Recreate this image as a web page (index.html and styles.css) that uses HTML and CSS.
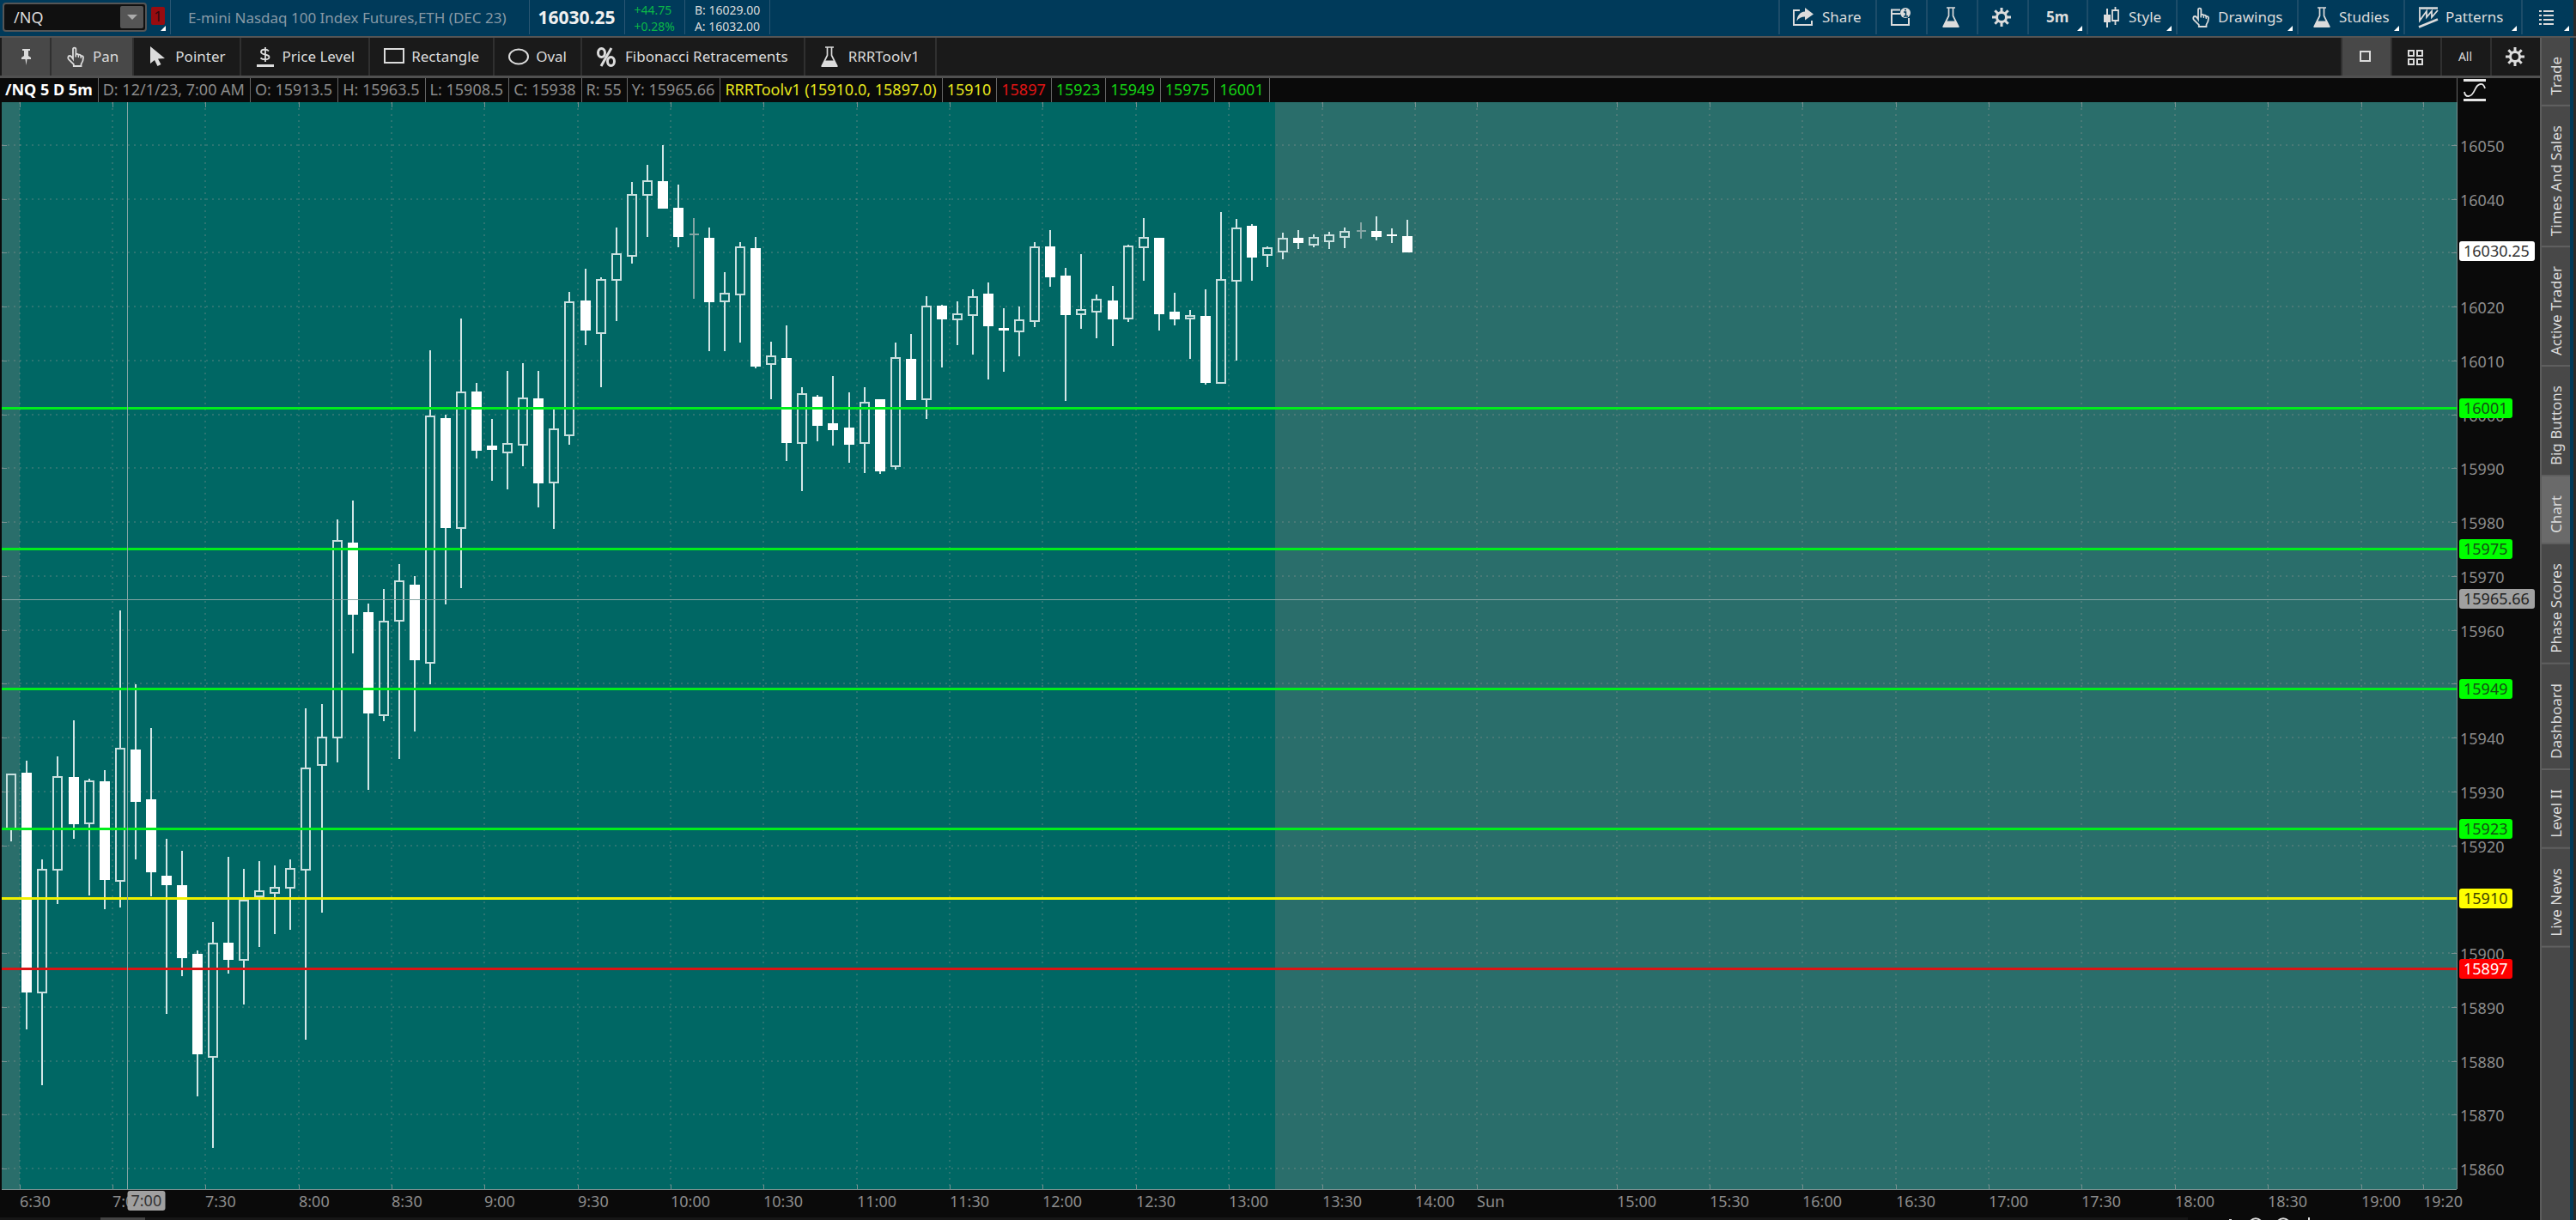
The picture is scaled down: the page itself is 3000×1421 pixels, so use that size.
FILE: index.html
```html
<!DOCTYPE html>
<html lang="en">
<head>
    <meta charset="UTF-8">
    <meta name="viewport" content="width=device-width, initial-scale=1.0">
    <title>/NQ Chart</title>
    <link rel="stylesheet" href="styles.css">
</head>
<body>
    <svg class="defs" width="0" height="0" aria-hidden="true">
        <symbol id="hand" viewBox="0 0 24 24">
            <path d="M9 14.500V3.500c0-2.600 3.400-2.600 3.400 0V9.500c.6-1 2.700-1 3 .6 1-.8 2.700-.3 2.900 1.200 1.300-.6 2.700.2 2.700 1.800 0 3.400-.8 5.500-2.500 7.700V23H9.800v-2.200L4.200 15.300c-1.700-1.800-1-4.300 1-4.300 1.400 0 2.600 1.500 3.800 3.500z" fill="none" stroke="currentColor" stroke-width="1.800"/>
            <path d="M12.400 9.500v3M15.400 10.500v2.500M18.300 11.500v2.500" stroke="currentColor" stroke-width="1.300"/>
        </symbol>
        <symbol id="flask" viewBox="0 0 24 24">
            <path d="M7 1h10M9.500 1v9.500L3.500 22.500h17L14.500 10.500V1" fill="none" stroke="currentColor" stroke-width="1.700"/>
            <path d="M6.500 16.500h11l4.200 7.500H2.300z" fill="currentColor"/>
        </symbol>
        <symbol id="gear" viewBox="0 0 24 24">
            <g stroke="currentColor" stroke-width="3">
                <path d="M12 1v5M12 18v5M1 12h5M18 12h5M4.300 4.300l3.500 3.500M16.200 16.200l3.500 3.500M4.300 19.700l3.500-3.500M16.200 7.800l3.500-3.500"/>
                <circle cx="12" cy="12" r="5.500" fill="none"/>
            </g>
        </symbol>
    </svg>

    <header class="topbar">
        <div class="symbol-box">
            <input class="symbol-input" type="text" value="/NQ" aria-label="Symbol">
            <button class="symbol-drop" aria-label="Recent symbols"></button>
        </div>
        <button class="link-group corner" aria-label="Link group 1"><span>1</span></button>
        <div class="title">E-mini Nasdaq 100 Index Futures,ETH (DEC 23)</div>
        <div class="last">16030.25</div>
        <div class="pair change"><span>+44.75</span><span>+0.28%</span></div>
        <div class="pair"><span>B: 16029.00</span><span>A: 16032.00</span></div>
        <nav class="actions">
            <button class="action share">
                <svg viewBox="0 0 24 24"><path d="M8 4H1v17h21v-5" fill="none" stroke="currentColor" stroke-width="2"/><path d="M14 1l10 7.500-10 7V11.500c-4 0-7.500 1.500-9.500 5C5 10.500 8 6 14 5.500z" fill="currentColor"/></svg>
                Share
            </button>
            <button class="action icon-only" aria-label="Chart info">
                <svg viewBox="0 0 24 24"><path d="M12 3.500H2v17.500h20v-8M2 8h10" fill="none" stroke="currentColor" stroke-width="2"/><circle cx="18" cy="7" r="6" fill="currentColor"/><path d="M16 6h2.500v4.500M16 11h5M17 3.500h2" fill="none" stroke="#003a5a" stroke-width="1.500"/></svg>
            </button>
            <button class="action icon-only" aria-label="Edit studies"><svg><use href="#flask"/></svg></button>
            <button class="action icon-only" aria-label="Chart settings"><svg><use href="#gear"/></svg></button>
            <button class="action period corner">5m</button>
            <button class="action style corner">
                <svg viewBox="0 0 24 24"><path d="M7 2v22" stroke="currentColor" stroke-width="2"/><path d="M3 9h8v9H3z" fill="currentColor"/><path d="M16.500 0v4M16.500 16v5M13 4h7v12h-7z" fill="none" stroke="currentColor" stroke-width="1.800"/></svg>
                Style
            </button>
            <button class="action drawings corner"><svg><use href="#hand"/></svg>Drawings</button>
            <button class="action studies corner"><svg><use href="#flask"/></svg>Studies</button>
            <button class="action patterns corner">
                <svg viewBox="0 0 24 24"><path d="M1 1.500h22" stroke="currentColor" stroke-width="2.500"/><path d="M2 3v13l8-11v7l6-7v7l7-8" fill="none" stroke="currentColor" stroke-width="1.800"/><path d="M1 23.500l22-9" stroke="currentColor" stroke-width="2.500"/></svg>
                Patterns
            </button>
            <button class="action menu corner" aria-label="Menu">
                <svg viewBox="0 0 24 24"><path d="M4 5h3M4 10h3M4 15h3M4 20h3M9 5h12M9 10h12M9 15h12M9 20h12" stroke="currentColor" stroke-width="2"/></svg>
            </button>
        </nav>
    </header>

    <div class="workspace">
        <main class="panel">
            <div class="toolbar">
                <button class="tool pin active" aria-label="Pin toolbar">
                    <svg viewBox="0 0 24 24"><path d="M8 3h9v2h-2v6l3 2v2H7v-2l3-2V5H8zM11.500 15h2L12.500 22z" fill="currentColor"/></svg>
                </button>
                <button class="tool active"><svg><use href="#hand"/></svg>Pan</button>
                <button class="tool"><svg viewBox="0 0 24 24"><path d="M3 0v20l5-4 3.500 7 4-2-3.500-6.500 8-.5z" fill="currentColor"/></svg>Pointer</button>
                <button class="tool"><svg viewBox="0 0 24 24"><path d="M16 5.500C14 3 7 3 7 6.500c0 4 9.500 2 9.500 6 0 3.500-7.500 3.500-10 1M12 1v17" fill="none" stroke="currentColor" stroke-width="1.800"/><path d="M2 22.500h20" stroke="currentColor" stroke-width="3"/></svg>Price Level</button>
                <button class="tool"><svg viewBox="0 0 24 24"><path d="M1 3h22v16H1z" fill="none" stroke="currentColor" stroke-width="2"/></svg>Rectangle</button>
                <button class="tool"><svg viewBox="0 0 24 24"><ellipse cx="12" cy="12" rx="11" ry="8.500" fill="none" stroke="currentColor" stroke-width="2"/></svg>Oval</button>
                <button class="tool wide"><svg viewBox="0 0 24 24"><g fill="none" stroke="currentColor" stroke-width="3"><ellipse cx="6.500" cy="7.500" rx="4" ry="5"/><ellipse cx="17.500" cy="17.500" rx="4" ry="5"/><path d="M18 2L6 23"/></g></svg>Fibonacci Retracements</button>
                <button class="tool wide"><svg><use href="#flask"/></svg>RRRToolv1</button>
                <div class="layouts">
                    <button class="layout active" aria-label="Single chart"><svg viewBox="0 0 24 24"><path d="M6 6h11v11H6z" fill="none" stroke="currentColor" stroke-width="2"/></svg></button>
                    <button class="layout" aria-label="Chart grid"><svg viewBox="0 0 24 24"><path d="M4 5h6v6H4zM14 5h6v6h-6zM4 15h6v6H4zM14 15h6v6h-6z" fill="none" stroke="currentColor" stroke-width="2"/></svg></button>
                    <button class="layout all">All</button>
                    <button class="layout" aria-label="Toolbar settings"><svg><use href="#gear"/></svg></button>
                </div>
            </div>

            <div class="status">
                <span class="cell name">/NQ 5 D 5m</span>
                <span class="cell">D: 12/1/23, 7:00 AM</span>
                <span class="cell">O: 15913.5</span>
                <span class="cell">H: 15963.5</span>
                <span class="cell">L: 15908.5</span>
                <span class="cell">C: 15938</span>
                <span class="cell">R: 55</span>
                <span class="cell">Y: 15965.66</span>
                <span class="cell yellow">RRRToolv1 (15910.0, 15897.0)</span>
                <span class="cell yellow">15910</span>
                <span class="cell red">15897</span>
                <span class="cell green">15923</span>
                <span class="cell green">15949</span>
                <span class="cell green">15975</span>
                <span class="cell green">16001</span>
                <button class="scale" aria-label="Price axis scale">
                    <svg viewBox="0 0 26 28"><path d="M0 2.500h26M0 25.500h26" stroke="currentColor" stroke-width="3"/><path d="M1 16c1 7 8 7 12-2S23 5 25 12" fill="none" stroke="currentColor" stroke-width="1.800"/></svg>
                </button>
            </div>

            <svg class="chart" id="chart"></svg>

            <div class="scroller">
                <div class="track"><div class="thumb"></div></div>
                <svg class="zoom-icons" viewBox="0 0 120 4"><path d="M4 3h3M29 4a8 8 0 0 1 12 0M61 4a8 8 0 0 1 12 0M97 0v4" fill="none" stroke="currentColor" stroke-width="2"/></svg>
            </div>
        </main>

        <aside class="tabs">
            <button class="tab">Trade</button>
            <button class="tab">Times And Sales</button>
            <button class="tab">Active Trader</button>
            <button class="tab">Big Buttons</button>
            <button class="tab current">Chart</button>
            <button class="tab">Phase Scores</button>
            <button class="tab">Dashboard</button>
            <button class="tab">Level II</button>
            <button class="tab">Live News</button>
        </aside>
    </div>
    <script src="chart.js"></script>
</body>
</html>
```
FILE: styles.css
```css
* {
    box-sizing: border-box;
}
body {
    margin: 0;
    height: 100vh;
    display: flex;
    flex-direction: column;
    overflow: hidden;
    background-color: #0a0a0a;
    color: #dcdcdc;
    font-family: "Noto Sans", "Open Sans", sans-serif;
    font-size: 17px;
    line-height: 24px;
}
button, input {
    font: inherit;
    color: inherit;
    border: none;
    border-radius: 0;
    padding: 0;
    margin: 0;
    background: none;
}
button {
    cursor: pointer;
    white-space: nowrap;
}
svg {
    display: block;
    flex: none;
}
.defs {
    position: absolute;
}

/* top bar */
.topbar {
    display: flex;
    flex: none;
    height: 42px;
    padding-bottom: 2px;
    background-color: #003a5a;
    border-right: 3px solid #2a2a2a;
}
.symbol-box {
    display: flex;
    width: 168px;
    height: 34px;
    margin: 3px 0 0 3px;
    padding: 2px;
    border: 2px solid #555;
    border-radius: 4px;
    background-color: #101010;
}
.symbol-input {
    flex: 1;
    min-width: 0;
    padding-left: 9px;
    font-size: 18px;
}
.symbol-drop {
    width: 27px;
    background-color: #555;
    border-radius: 2px;
}
.symbol-drop::before {
    content: '';
    display: block;
    width: 0;
    margin: 0 auto;
    border: 6px solid transparent;
    border-top-color: #aaa;
    border-bottom: none;
}
.link-group {
    width: 28px;
    padding-left: 5px;
    border-right: 1px solid #2a5673;
}
.link-group span {
    display: block;
    width: 16px;
    height: 21px;
    margin-bottom: 4px;
    line-height: 21px;
    background-color: #980c10;
    color: #300a10;
    border-radius: 2px;
}
.corner {
    position: relative;
}
.corner::after {
    content: '';
    position: absolute;
    right: 5px;
    bottom: 4px;
    border: 3px solid #fff;
    border-top-color: transparent;
    border-left-color: transparent;
}
.title {
    padding: 0 26px 0 20px;
    line-height: 41px;
    color: #8799a6;
    border-right: 1px solid #2a5673;
}
.last {
    padding: 0 10px;
    line-height: 41px;
    font-size: 21px;
    font-weight: bold;
    color: #f0f0f0;
    border-right: 1px solid #2a5673;
}
.pair {
    display: flex;
    flex-direction: column;
    padding: 2px 11px 0;
    font-size: 14px;
    line-height: 19px;
    border-right: 1px solid #2a5673;
}
.change {
    color: #0bb648;
}
.actions {
    display: flex;
    margin-left: auto;
}
.action {
    display: flex;
    align-items: center;
    gap: 8px;
    padding-left: 15px;
    border-left: 2px solid #1c4c69;
}
.action svg {
    width: 24px;
    height: 26px;
}
.share {
    width: 113px;
    gap: 10px;
}
.icon-only {
    width: 59px;
}
.period {
    width: 69px;
    padding-left: 20px;
    font-weight: bold;
}
.style {
    width: 104px;
}
.drawings {
    width: 141px;
}
.studies {
    width: 124px;
}
.patterns {
    width: 137px;
}
.menu {
    width: 61px;
}

/* workspace */
.workspace {
    flex: 1;
    min-height: 0;
    display: flex;
    border-top: 2px solid #555;
}
.panel {
    flex: 1;
    min-width: 0;
    display: flex;
    flex-direction: column;
}
.toolbar {
    display: flex;
    flex: none;
    height: 47px;
    padding-left: 2px;
    background-color: #1a1a1a;
    border-bottom: 3px solid #505050;
}
.tool {
    display: flex;
    align-items: center;
    gap: 8px;
    padding: 0 16px;
    border-right: 2px solid #303030;
}
.wide {
    padding-right: 18px;
    gap: 10px;
}
.tool svg, .layout svg {
    width: 24px;
    height: 24px;
}
.active {
    background-color: #484848;
}
.layouts {
    display: flex;
    margin-left: auto;
}
.layout {
    display: flex;
    align-items: center;
    justify-content: center;
    width: 58px;
    padding-right: 2px;
    border-left: 2px solid #303030;
}
.all {
    font-size: 14px;
}
.status {
    display: flex;
    flex: none;
    height: 28px;
    padding-left: 2px;
    font-size: 18px;
    line-height: 27px;
    color: #8c8c8c;
    white-space: nowrap;
}
.cell {
    padding: 0 6px 0 5px;
    border-right: 1px solid #666;
}
.name {
    padding-left: 4px;
    color: #fff;
    font-weight: bold;
}
.yellow {
    color: #e6e61e;
}
.red {
    color: #e01414;
}
.green {
    color: #14d214;
}
.scale {
    width: 97px;
    margin-left: auto;
    padding-left: 7px;
    border-left: 1px solid #666;
    color: #e6e6e6;
}
.scale svg {
    width: 26px;
    height: 28px;
}
.chart {
    flex: 1;
    width: 100%;
    min-height: 0;
}
.scroller {
    display: flex;
    flex: none;
    height: 3px;
    overflow: hidden;
}
.track {
    flex: 1;
    padding-left: 117px;
    background-color: #161616;
}
.thumb {
    width: 52px;
    height: 3px;
    background-color: #444;
}
.zoom-icons {
    width: 120px;
    height: 4px;
    margin: 0 246px 0 44px;
}

/* side tabs */
.tabs {
    width: 42px;
    display: flex;
    flex-direction: column;
    background-color: #484848;
    border-left: 2px solid #5c5c5c;
    border-right: 3px solid #2a2a2a;
    box-shadow: inset -4px 0 #003a5a;
}
.tab {
    writing-mode: vertical-rl;
    transform: rotate(180deg);
    width: 33px;
    padding: 11px 0 22px;
    line-height: 31px;
    border-top: 2px solid #606060;
}
.current {
    background-color: #6a6a6a;
}

/* chart drawing */
.bg-off {
    fill: #2a6e6b;
}
.bg-session {
    fill: #006764;
}
.grid {
    stroke: rgba(165, 160, 155, 0.26);
    stroke-width: 2;
    stroke-dasharray: 2 5;
}
.tick, .frame {
    stroke: #789090;
    stroke-width: 1;
}
.wick {
    stroke: #d2e6e6;
    stroke-width: 2;
}
.body-up {
    fill: none;
    stroke: #c8dfde;
    stroke-width: 2;
}
.body-down {
    fill: #fff;
}
.doji {
    stroke: #85a5a4;
    stroke-width: 2;
}
.level {
    stroke-width: 3;
}
.cross {
    stroke: #85a5a4;
    stroke-width: 1;
}
.axis-text {
    fill: #8c8c8c;
    font-size: 18px;
}
.tag-text {
    font-size: 18px;
}
```
FILE: chart.js
```js
// wick top, body top, body bottom, wick bottom, type (u = up, d = down, x = unchanged)
const candles = [
    [902, 902, 966, 980, 'u'], [886, 900, 1156, 1199, 'd'], [1001, 1013, 1156, 1264, 'u'], [881, 905, 1013, 1053, 'u'],
    [839, 905, 960, 977, 'd'], [907, 910, 959, 1043, 'u'], [897, 910, 1025, 1059, 'd'], [711, 872, 1026, 1057, 'u'],
    [797, 873, 934, 1001, 'd'], [848, 931, 1016, 1044, 'd'], [977, 1020, 1031, 1181, 'd'], [991, 1031, 1116, 1137, 'd'],
    [1107, 1111, 1228, 1277, 'd'], [1074, 1099, 1231, 1337, 'u'], [998, 1098, 1118, 1134, 'd'], [1012, 1049, 1118, 1170, 'u'],
    [1003, 1038, 1044, 1103, 'u'], [1008, 1034, 1040, 1088, 'u'], [1001, 1012, 1034, 1083, 'u'], [825, 895, 1013, 1211, 'u'],
    [820, 859, 891, 1063, 'u'], [605, 630, 859, 888, 'u'], [583, 632, 716, 761, 'd'], [703, 713, 831, 920, 'd'],
    [686, 724, 833, 840, 'u'], [657, 677, 723, 884, 'u'], [671, 681, 769, 852, 'd'], [408, 485, 772, 797, 'u'],
    [483, 487, 615, 704, 'd'], [371, 457, 615, 685, 'u'], [446, 456, 525, 534, 'd'], [488, 519, 524, 560, 'd'],
    [432, 517, 527, 570, 'u'], [423, 464, 518, 543, 'u'], [432, 464, 563, 591, 'd'], [477, 500, 562, 616, 'u'],
    [340, 352, 507, 518, 'u'], [313, 350, 385, 402, 'd'], [323, 326, 388, 451, 'u'], [265, 296, 326, 374, 'u'],
    [212, 227, 298, 307, 'u'], [192, 211, 227, 276, 'u'], [169, 211, 243, 243, 'd'], [215, 242, 276, 288, 'd'],
    [254, 273, 273, 348, 'x'], [265, 277, 352, 409, 'd'], [317, 342, 351, 409, 'u'], [282, 288, 343, 399, 'u'],
    [276, 289, 427, 429, 'd'], [398, 415, 424, 465, 'u'], [379, 417, 516, 537, 'd'], [451, 459, 516, 572, 'u'],
    [460, 462, 496, 514, 'd'], [438, 493, 501, 519, 'd'], [457, 498, 518, 539, 'd'], [451, 469, 516, 551, 'u'],
    [465, 465, 549, 552, 'd'], [399, 417, 543, 547, 'u'], [389, 418, 466, 466, 'd'], [345, 357, 465, 488, 'u'],
    [355, 356, 372, 428, 'd'], [351, 366, 372, 402, 'u'], [337, 346, 367, 413, 'u'], [329, 342, 380, 442, 'd'],
    [359, 382, 385, 433, 'd'], [357, 373, 386, 415, 'u'], [282, 288, 374, 381, 'u'], [268, 287, 323, 334, 'd'],
    [312, 321, 367, 467, 'd'], [296, 361, 366, 383, 'u'], [343, 349, 363, 394, 'u'], [333, 350, 372, 403, 'd'],
    [285, 287, 371, 375, 'u'], [254, 277, 288, 327, 'u'], [277, 277, 366, 385, 'd'], [341, 363, 372, 379, 'd'],
    [361, 368, 371, 418, 'u'], [337, 368, 446, 448, 'd'], [247, 326, 446, 446, 'u'], [255, 266, 327, 420, 'u'],
    [261, 263, 300, 327, 'd'], [287, 289, 297, 311, 'u'], [271, 278, 293, 302, 'u'], [268, 277, 283, 290, 'd'],
    [273, 277, 285, 288, 'u'], [270, 274, 281, 290, 'u'], [265, 270, 276, 289, 'u'], [259, 269, 269, 278, 'x'],
    [252, 269, 276, 280, 'd'], [266, 273, 275, 283, 'd'], [256, 275, 294, 294, 'd']
];

// bar index of every time label
const times = [
    [0, '6:30'], [6, '7:00'], [12, '7:30'], [18, '8:00'], [24, '8:30'], [30, '9:00'], [36, '9:30'],
    [42, '10:00'], [48, '10:30'], [54, '11:00'], [60, '11:30'], [66, '12:00'], [72, '12:30'],
    [78, '13:00'], [84, '13:30'], [90, '14:00'], [94, 'Sun'], [103, '15:00'], [109, '15:30'],
    [115, '16:00'], [121, '16:30'], [127, '17:00'], [133, '17:30'], [139, '18:00'], [145, '18:30'],
    [151, '19:00'], [155, '19:20']
];

const levels = [
    [16001, '#00ee1c'], [15975, '#00ee1c'], [15949, '#00ee1c'], [15923, '#00ee1c'],
    [15910, '#f0f000'], [15897, '#dc1414']
];

const tags = [
    ['16030.25', '#ffffff', '#333'], ['16001', '#00ff00', '#145014'], ['15975', '#00ff00', '#145014'],
    ['15965.66', '#a0a0a0', '#222'], ['15949', '#00ff00', '#145014'], ['15923', '#00ff00', '#145014'],
    ['15910', '#ffff00', '#444400'], ['15897', '#ff0000', '#ffffff']
];

function draw() {
    const svg = document.getElementById('chart');
    const width = svg.clientWidth;
    const height = svg.clientHeight;
    const right = width - 97;
    const bottom = height - 33;
    const sx = right / 2861;
    const sy = bottom / 1266;
    const barX = i => Math.round((22.5 + i * 18.06) * sx);
    const rowY = v => (v - 119) * sy;
    const priceY = p => Math.round(rowY(169 + (16050 - p) * 6.274));
    let out = '';

    const rect = (x, y, w, h, attrs) => { out += `<rect x="${x}" y="${y}" width="${w}" height="${h}" ${attrs}/>`; };
    const line = (x1, y1, x2, y2, attrs) => { out += `<line x1="${x1}" y1="${y1}" x2="${x2}" y2="${y2}" ${attrs}/>`; };
    const text = (x, y, value, attrs) => { out += `<text x="${x}" y="${y}" ${attrs}>${value}</text>`; };

    rect(2, 0, right - 2, bottom, 'class="bg-off"');
    rect(barX(0), 0, barX(81) - barX(0), bottom, 'class="bg-session"');

    // grid and price axis
    for (let p = 15860; p <= 16050; p += 10) {
        const y = priceY(p);
        line(2, y, right, y, 'class="grid"');
        line(2, y + 0.5, 8, y + 0.5, 'class="tick"');
        line(right - 6, y + 0.5, right, y + 0.5, 'class="tick"');
        if (p !== 16030 && p !== 15950 && p !== 15910) {
            text(right + 4, y + 8, p, 'class="axis-text"');
        }
    }
    // time axis
    times.forEach(([i, label]) => {
        const x = barX(i);
        line(x, 0, x, bottom, 'class="grid"');
        line(x + 0.5, 0, x + 0.5, 6, 'class="tick"');
        line(x + 0.5, bottom - 5, x + 0.5, bottom, 'class="tick"');
        text(x, bottom + 21, label, 'class="axis-text"');
    });
    line(2, bottom + 0.5, right, bottom + 0.5, 'class="frame"');
    line(right + 0.5, 0, right + 0.5, bottom, 'class="frame"');

    candles.forEach(([high, top, low, tail, type], i) => {
        const x = Math.round((13.3 + i * 18.06) * sx);
        const [y1, y2, y3, y4] = [high, top, low, tail].map(v => Math.round(rowY(v)));
        const wick = type === 'x' ? 'class="doji"' : 'class="wick"';
        line(x, y1, x, y2, wick);
        line(x, y3, x, y4, wick);
        if (type === 'u') {
            rect(x - 5, y2, 10, y3 - y2, 'class="body-up"');
        } else if (type === 'd') {
            rect(x - 6, y2, 12, y3 - y2, 'class="body-down"');
        } else {
            line(x - 5, y2, x + 6, y2, 'class="doji"');
        }
    });

    levels.forEach(([p, color]) => line(2, priceY(p) - 0.5, right, priceY(p) - 0.5, `class="level" stroke="${color}"`));

    // crosshair
    const crossY = priceY(15965.66) + 0.5;
    const crossX = Math.round(148 * sx) + 0.5;
    line(2, crossY, right, crossY, 'class="cross"');
    line(crossX, 0, crossX, bottom, 'class="cross"');
    rect(crossX, bottom + 2, 44, 23, 'rx="3" fill="#a0a0a0"');
    text(crossX + 4, bottom + 20, '7:00', 'class="tag-text" fill="#333"');

    tags.forEach(([label, back, color]) => {
        const y = priceY(Number(label));
        rect(right + 3, y - 12, label.length > 5 ? 88 : 62, 23, `rx="3" fill="${back}"`);
        text(right + 8, y + 6, label, `class="tag-text" fill="${color}"`);
    });

    svg.innerHTML = out;
}

draw();
window.addEventListener('resize', draw);
```
